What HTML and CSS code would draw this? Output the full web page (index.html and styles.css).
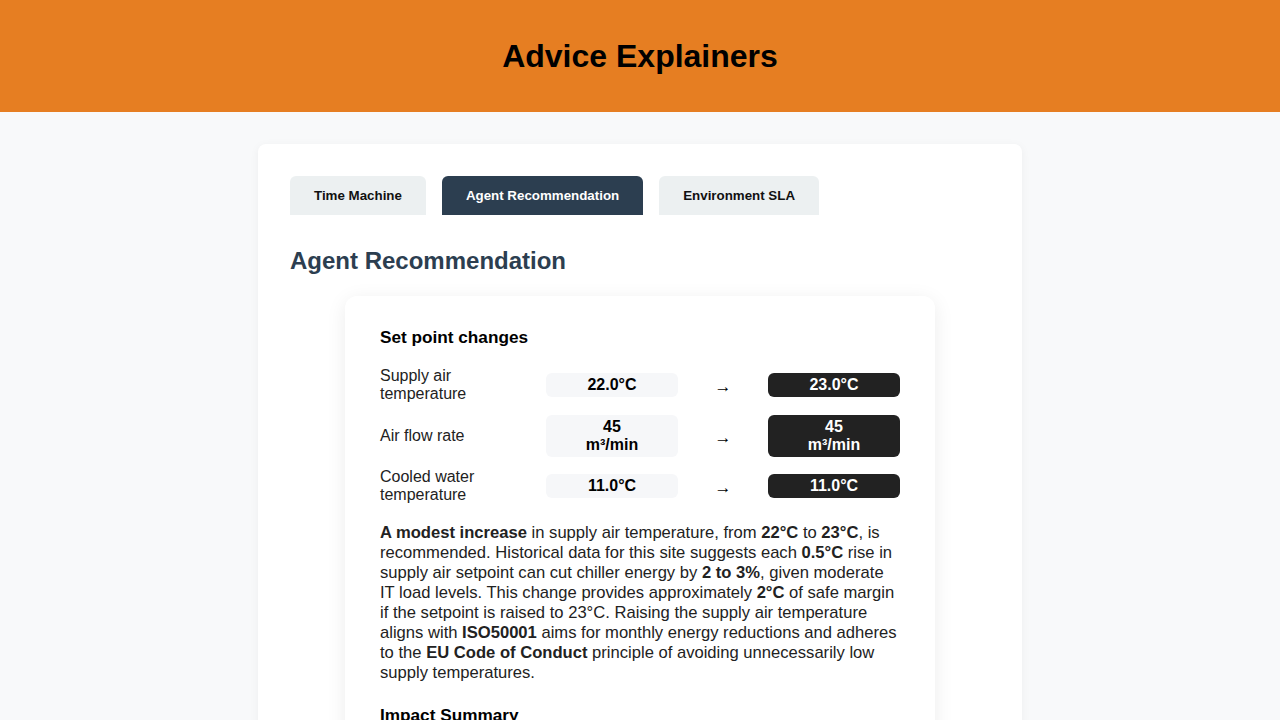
FILE: index.html
```html
<!DOCTYPE html>
<html lang="en">
<head>
<meta charset="utf-8">
<title>Advice Explainers</title>
<link rel="stylesheet" href="styles.css">
</head>
<body>
<header class="site-header">
  <h1 class="site-title">Advice Explainers</h1>
</header>
<main class="panel">
  <nav class="tabs">
    <button class="tab">Time Machine</button>
    <button class="tab tab-active">Agent Recommendation</button>
    <button class="tab">Environment SLA</button>
  </nav>
  <h2 class="section-title">Agent Recommendation</h2>
  <section class="card">
    <h3 class="card-title">Set point changes</h3>
    <div class="changes">
      <div class="change-row">
        <div class="change-label">Supply air temperature</div>
        <div class="value value-old">22.0°C</div>
        <div class="arrow">→</div>
        <div class="value value-new">23.0°C</div>
      </div>
      <div class="change-row">
        <div class="change-label">Air flow rate</div>
        <div class="value value-old">45<br>m³/min</div>
        <div class="arrow">→</div>
        <div class="value value-new">45<br>m³/min</div>
      </div>
      <div class="change-row">
        <div class="change-label">Cooled water temperature</div>
        <div class="value value-old">11.0°C</div>
        <div class="arrow">→</div>
        <div class="value value-new">11.0°C</div>
      </div>
    </div>
    <p class="explain"><strong>A modest increase</strong> in supply air temperature, from <strong>22°C</strong> to <strong>23°C</strong>, is recommended. Historical data for this site suggests each <strong>0.5°C</strong> rise in supply air setpoint can cut chiller energy by <strong>2 to 3%</strong>, given moderate IT load levels. This change provides approximately <strong>2°C</strong> of safe margin if the setpoint is raised to 23°C. Raising the supply air temperature aligns with <strong>ISO50001</strong> aims for monthly energy reductions and adheres to the <strong>EU Code of Conduct</strong> principle of avoiding unnecessarily low supply temperatures.</p>
    <h3 class="card-title">Impact Summary</h3>
    <p class="explain">The projected change reduces chiller energy while keeping all monitored rack inlet temperatures within the recommended envelope.</p>
  </section>
</main>
</body>
</html>
```
FILE: styles.css
```css
* { box-sizing: border-box; }
html, body { margin: 0; padding: 0; }
body {
  background: #f8f9fa;
  font-family: "Liberation Sans", Arial, sans-serif;
  color: #222;
}
.site-header {
  background: #e67e22;
  padding: 37px 0;
  text-align: center;
}
.site-title {
  margin: 0;
  font-size: 32px;
  line-height: 38px;
  font-weight: bold;
  color: #000;
}
.panel {
  width: 764px;
  margin: 32px auto 0;
  background: #fff;
  border-radius: 8px;
  padding: 32px;
  box-shadow: 0 2px 10px rgba(0, 0, 0, 0.05);
}
.tabs {
  display: flex;
  gap: 16px;
  margin-bottom: 32px;
}
.tab {
  border: none;
  background: #ecf0f1;
  color: #111;
  font-family: "Liberation Sans", Arial, sans-serif;
  font-size: 13.333px;
  font-weight: bold;
  line-height: 15px;
  padding: 12px 24px;
  border-radius: 6px 6px 0 0;
}
.tab-active {
  background: #2c3e50;
  color: #fff;
}
.section-title {
  margin: 0 0 21px;
  font-size: 24px;
  line-height: 28px;
  color: #2c3e50;
}
.card {
  width: 590px;
  margin: 0 auto;
  background: #fff;
  border-radius: 12px;
  padding: 31px 35px;
  box-shadow: 0 4px 20px rgba(0, 0, 0, 0.08);
}
.card-title {
  margin: 0 0 20px;
  font-size: 17.2px;
  line-height: 20px;
  color: #000;
}
.changes {
  display: flex;
  flex-direction: column;
  gap: 11.5px;
  margin-bottom: 19px;
}
.change-row {
  display: grid;
  grid-template-columns: 1fr 132px 90px 132px;
  align-items: center;
}
.change-label {
  font-size: 16px;
  line-height: 18px;
  padding-right: 20px;
}
.value {
  font-size: 16px;
  font-weight: bold;
  line-height: 18px;
  padding: 3px 6px;
  text-align: center;
  border-radius: 6px;
}
.value-old {
  background: #f6f7f9;
  color: #000;
}
.value-new {
  background: #222;
  color: #fff;
}
.arrow {
  text-align: center;
  font-size: 17px;
  line-height: 18px;
  padding-top: 4px;
  color: #000;
}
.explain {
  margin: 0 0 22px;
  font-size: 16.6px;
  line-height: 20px;
  color: #222;
}
```
